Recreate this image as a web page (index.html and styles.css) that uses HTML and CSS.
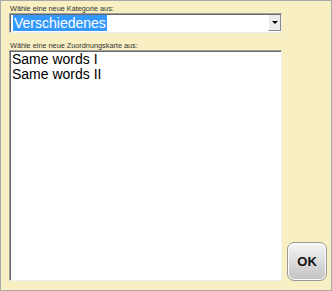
FILE: index.html
```html
<!DOCTYPE html>
<html lang="de">
<head>
    <meta charset="UTF-8">
    <title>Zuordnungskarte wählen</title>
    <link rel="stylesheet" href="styles.css">
</head>
<body>
    <div class="window">
        <div class="main">
            <label class="caption">Wähle eine neue Kategorie aus:</label>
            <div class="combo">
                <span class="combo-text"><span class="selected">Verschiedenes</span></span>
                <span class="combo-button"><span class="arrow"></span></span>
            </div>

            <label class="caption second">Wähle eine neue Zuordnungskarte aus:</label>
            <ul class="listbox">
                <li>Same words I</li>
                <li>Same words II</li>
            </ul>
        </div>

        <button class="ok-button">OK</button>
    </div>
</body>
</html>
```

FILE: styles.css
```css
body {
    margin: 0;
    padding: 0;
    font-family: 'Liberation Sans', Arial, sans-serif;
}

.window {
    box-sizing: border-box;
    width: 332px;
    height: 291px;
    border: 1px solid #a8a8a8;
    background: #f8efc2;
    display: flex;
    padding: 3px 4px 9px 8px;
}

.main {
    width: 274px;
    display: flex;
    flex-direction: column;
}

.caption {
    font-size: 7.3px;
    line-height: 9px;
    color: #333;
    padding-left: 1px;
}

.second {
    margin-top: 8px;
}

.combo {
    box-sizing: border-box;
    height: 20px;
    display: flex;
    background: white;
    border-top: 1px solid #a0a0a0;
    border-left: 1px solid #a0a0a0;
    border-right: 1px solid #f0f0f0;
    border-bottom: 1px solid #f0f0f0;
    box-shadow: inset 1px 1px 0 #696969;
}

.combo-text {
    flex: 1;
    padding: 2px 0 0 3px;
    font-size: 14px;
    line-height: 15px;
}

.selected {
    background: #3399ff;
    color: white;
    padding: 0 1px;
}

.combo-button {
    width: 11px;
    margin: 1px 0 1px 0;
    background: #ececec;
    border-left: 1px solid #fff;
    border-right: 1px solid #888;
    border-bottom: 1px solid #888;
    display: flex;
    align-items: center;
    justify-content: center;
}

.arrow {
    width: 0;
    height: 0;
    border-left: 3px solid transparent;
    border-right: 3px solid transparent;
    border-top: 3px solid #000;
}

.listbox {
    flex: 1;
    list-style: none;
    margin: 0;
    padding: 1px 2px;
    background: white;
    border-top: 1px solid #a0a0a0;
    border-left: 1px solid #a0a0a0;
    border-right: 1px solid #f0f0f0;
    border-bottom: 1px solid #f0f0f0;
    box-shadow: inset 1px 1px 0 #696969;
    font-size: 14px;
    line-height: 15px;
}

.ok-button {
    align-self: flex-end;
    margin-left: 5px;
    width: 40px;
    height: 39px;
    border: 1px solid #9a9a9a;
    border-radius: 7px;
    background: linear-gradient(#f6f6f6, #d6d6d6 60%, #c4c4c4);
    box-shadow: inset 0 0 0 1px #fafafa;
    font-family: 'Liberation Sans', Arial, sans-serif;
    font-weight: bold;
    font-size: 13px;
    color: #111;
    padding: 0;
}
```
